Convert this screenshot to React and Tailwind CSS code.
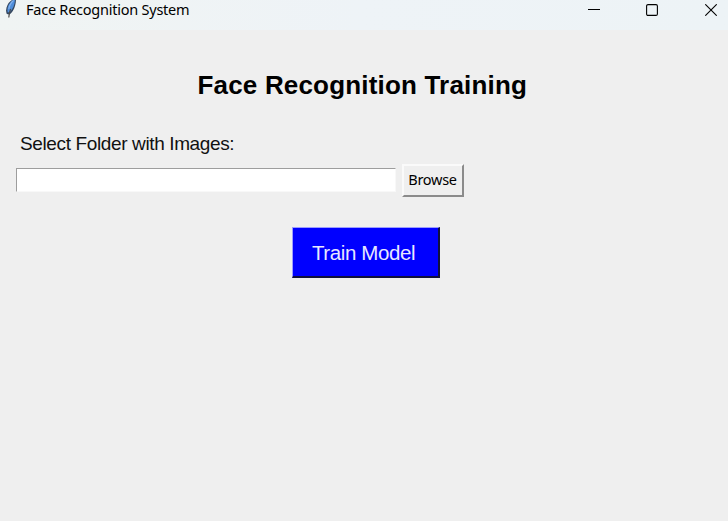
function Feather() {
  return (
    <svg className="h-5 w-4 shrink-0" viewBox="0 0 16 20" fill="none">
      <path d="M14 -1 C10 -1 7 2 5.5 5 C4 8 3.6 11 4.8 14 L7.5 14.5 C11 12.5 14 6 14 -1Z" fill="#34475f" />
      <path d="M13 -1 C10 0 7.5 3 6.2 6 C5.3 8.5 5.2 10.5 5.8 12.5 L8 12 C11 9 13 4 13 -1Z" fill="#4f8edb" />
      <path d="M11.5 0.5 C9.3 2.5 7.3 5.5 6.8 9" stroke="#86b4ee" strokeWidth="1.1" />
      <path d="M8.6 9 C7.6 11.5 7 14 6.8 17.5" stroke="#4a4a4a" strokeWidth="1.2" />
    </svg>
  );
}

function TitleBar() {
  return (
    <header className="flex h-[30px] items-start bg-linear-to-r from-[#f0f4f3] via-[#eef3f7] to-[#edf3f6]">
      <div className="pl-[2px]">
        <Feather />
      </div>
      <span className="pl-2 font-['Noto_Sans',sans-serif] text-[14.5px] leading-[18px] tracking-[-0.24px] whitespace-nowrap text-black">
        Face Recognition System
      </span>
      <div className="ml-auto flex h-5 items-center gap-[46px] pr-[11px]">
        <svg className="size-[12px]" viewBox="0 0 12 12">
          <path d="M0 5.5H12" stroke="#000" />
        </svg>
        <svg className="size-[12px]" viewBox="0 0 12 12" fill="none">
          <rect x="0.6" y="0.6" width="10.8" height="10.8" rx="1.4" stroke="#000" strokeWidth="1.1" />
        </svg>
        <svg className="ml-px size-[12px]" viewBox="0 0 12 12">
          <path d="M0.3 0.3L11.7 11.7M11.7 0.3L0.3 11.7" stroke="#000" strokeWidth="1.1" />
        </svg>
      </div>
    </header>
  );
}

export default function App() {
  return (
    <div className="flex h-[521px] w-[728px] flex-col overflow-hidden bg-[#efefef] font-['Liberation_Sans',Arial,sans-serif] text-black">
      <TitleBar />
      <main className="flex flex-col">
        <h1 className="mt-10 pl-[197.5px] text-[26px] leading-[30px] font-bold tracking-[0.18px] whitespace-nowrap">
          Face Recognition Training
        </h1>
        <label className="mt-8 pl-5 text-[19px] leading-6 tracking-[-0.37px] whitespace-nowrap text-[#111]">
          Select Folder with Images:
        </label>
        <div className="mt-2 flex items-start pl-4">
          <input
            type="text"
            className="mt-1 h-6 w-[380px] border-t border-r border-b border-l border-t-[#9d9d9d] border-r-[#f8f8f8] border-b-[#f8f8f8] border-l-[#9d9d9d] bg-white outline-none"
          />
          <button className="ml-1.5 flex h-[33px] w-[62px] items-center justify-center border-t-2 border-r-2 border-b-2 border-l-2 border-t-[#fafafa] border-r-[#8b8b8b] border-b-[#8b8b8b] border-l-[#fafafa] bg-[#efefef] pr-px pb-0.5 font-['Noto_Sans',sans-serif] text-[14.5px] tracking-[-0.3px]">
            Browse
          </button>
        </div>
        <button className="mt-[30px] ml-[292px] flex h-[51px] w-[148px] items-center border-t border-r-2 border-b-2 border-l border-t-[#9c9cff] border-r-[#10103c] border-b-[#10103c] border-l-[#9c9cff] bg-[#0000ff] pt-0.5 pl-[19px] text-[20.5px] tracking-[-0.4px] whitespace-nowrap text-[#e8e8ff]">
          Train Model
        </button>
      </main>
    </div>
  );
}
